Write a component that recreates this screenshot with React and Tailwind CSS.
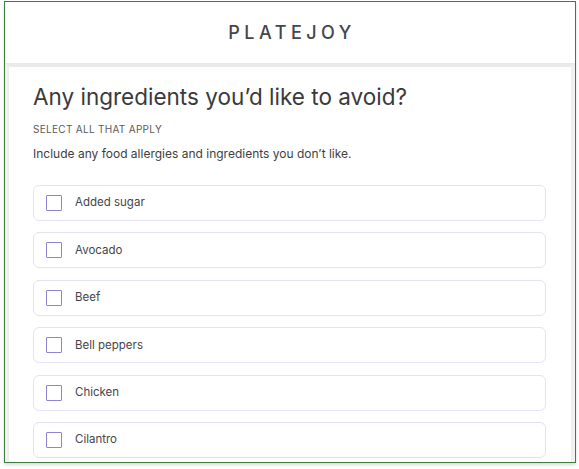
import { useState } from 'react'

const ingredients = ['Added sugar', 'Avocado', 'Beef', 'Bell peppers', 'Chicken', 'Cilantro']

export default function App() {
  const [checked, setChecked] = useState({})

  const toggle = (name) => setChecked((prev) => ({ ...prev, [name]: !prev[name] }))

  return (
    <div className="w-[579px] h-[469px] bg-white overflow-hidden" style={{ fontFamily: 'Inter, "Liberation Sans", sans-serif' }}>
      <div className="ml-[4px] mt-[1px] w-[572px] h-[462px] border border-[#3f7d3f] overflow-hidden flex flex-col shadow-[0_2px_3px_rgba(0,0,0,0.15)]">
        {/* Header */}
        <div className="h-[61px] shrink-0 bg-white flex items-center justify-center shadow-[0_2px_4px_rgba(0,0,0,0.06)] relative z-10">
          <span className="text-[18px] font-medium tracking-[4.5px] text-[#44454d] pl-[4px]">PLATEJOY</span>
        </div>

        {/* Content */}
        <div className="flex-1 bg-[#f3f3f3] px-[4px] pt-[4px]">
          <div className="bg-white h-full pl-[24px] pr-[25px] pt-[16px] shadow-[0_0_4px_rgba(0,0,0,0.06)]">
            <h1 className="text-[22.5px] leading-[28px] text-[#3a3a3c] font-normal">Any ingredients you’d like to avoid?</h1>
            <p className="mt-[11px] text-[10px] leading-[14px] tracking-[0.3px] text-[#5a5a5e] uppercase">Select all that apply</p>
            <p className="mt-[10px] text-[12px] leading-[16px] text-[#3e3e42]">Include any food allergies and ingredients you don’t like.</p>

            <div className="mt-[23px] flex flex-col gap-[11.4px]">
              {ingredients.map((name) => (
                <button
                  key={name}
                  onClick={() => toggle(name)}
                  className="h-[36px] w-full flex items-center gap-[13px] px-[12px] border border-[#e4e1f8] rounded-[6px] bg-white text-left"
                >
                  <span className={`w-[16px] h-[16px] border border-[#8e85d2] rounded-[1px] ${checked[name] ? 'bg-[#8e85d2]' : 'bg-white'}`}></span>
                  <span className="text-[11.5px] text-[#45454a]">{name}</span>
                </button>
              ))}
            </div>
          </div>
        </div>
      </div>
    </div>
  )
}
